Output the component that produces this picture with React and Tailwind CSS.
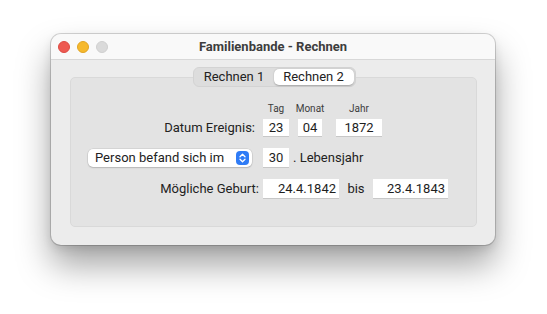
import React from "react";

function Field({ w, children, align = "center", h = "h-[18px]" }) {
  return (
    <div
      className={`${w} ${h} bg-white flex items-center ${
        align === "right" ? "justify-end pr-[3px]" : "justify-center"
      } text-[13px] text-[#1e1e1e] shadow-[0_0.5px_0.5px_rgba(0,0,0,0.12)]`}
    >
      {children}
    </div>
  );
}

export default function App() {
  return (
    <div
      className="w-[547px] h-[314px] bg-white pt-[34px] pl-[51px]"
      style={{ fontFamily: "Roboto, 'Liberation Sans', sans-serif" }}
    >
      <div className="w-[444px] h-[211px] rounded-[10px] bg-[#ececec] overflow-hidden flex flex-col shadow-[0_0_0_1px_rgba(0,0,0,0.16),0_20px_34px_rgba(0,0,0,0.36),0_4px_10px_rgba(0,0,0,0.1)]">
        {/* Title bar */}
        <div className="h-[26px] shrink-0 bg-[#f9f9f9] border-b border-[#d8d8d8] flex items-center relative">
          <div className="flex items-center gap-[7px] pl-[7px] pt-[1px]">
            <div className="w-[12px] h-[12px] rounded-full bg-[#ee5a52] border border-[#dc4b43]" />
            <div className="w-[12px] h-[12px] rounded-full bg-[#f6b92d] border border-[#e0a424]" />
            <div className="w-[12px] h-[12px] rounded-full bg-[#dadada] border border-[#cfcfcf]" />
          </div>
          <div className="absolute inset-0 flex items-center justify-center pt-[1px] text-[13px] font-bold text-[#3d3d3d] pointer-events-none">
            Familienbande - Rechnen
          </div>
        </div>

        {/* Body */}
        <div className="flex-1 flex flex-col pt-[7px] pl-[19px] pr-[18px] pb-[18px]">
          {/* Tabs */}
          <div className="relative z-10 flex justify-center pl-[1px]">
            <div className="flex h-[20px] w-[163px] rounded-[6px] bg-[#dddddd] border border-[#d3d3d3] p-[1px]">
              <div className="w-[79px] flex items-center justify-center text-[13px] text-[#222]">
                Rechnen 1
              </div>
              <div className="flex-1 flex items-center justify-center rounded-[5px] bg-white text-[13px] text-[#222] shadow-[0_0.5px_1.5px_rgba(0,0,0,0.25)]">
                Rechnen 2
              </div>
            </div>
          </div>

          {/* Group box */}
          <div className="-mt-[10px] flex-1 rounded-[5px] bg-[#e3e3e3] border border-[#d9d9d9] pt-[24px] flex flex-col">
            {/* header labels */}
            <div className="flex h-[12px] items-center text-[10px] text-[#3c3c3c]">
              <div className="w-[192px] shrink-0" />
              <div className="w-[26px] text-center">Tag</div>
              <div className="w-[9px]" />
              <div className="w-[24px] flex justify-center">
                <span>Monat</span>
              </div>
              <div className="w-[14px]" />
              <div className="w-[46px] text-center">Jahr</div>
            </div>

            {/* row 1 */}
            <div className="flex items-center mt-[5px] h-[17px]">
              <div className="w-[192px] shrink-0 text-right pr-[8px] text-[13px] text-[#222]">
                Datum Ereignis:
              </div>
              <Field w="w-[26px]" h="h-[17px]">23</Field>
              <div className="w-[9px]" />
              <Field w="w-[24px]" h="h-[17px]">04</Field>
              <div className="w-[14px]" />
              <Field w="w-[46px]" h="h-[17px]">1872</Field>
            </div>

            {/* row 2 */}
            <div className="flex items-center mt-[12px] h-[19px]">
              <div className="w-[192px] shrink-0 pl-[17px] pr-[11px]">
                <div className="h-[18px] rounded-[5px] bg-white shadow-[0_0_0_0.5px_rgba(0,0,0,0.12),0_1px_1.5px_rgba(0,0,0,0.15)] flex items-center pl-[7px] pr-[3px] text-[13px] text-[#222]">
                  <span className="flex-1">Person befand sich im</span>
                  <div className="w-[13px] h-[14px] rounded-[4px] bg-[#2f7cf6] flex items-center justify-center">
                    <svg width="7" height="10" viewBox="0 0 7 10" fill="none">
                      <path d="M1 3.7L3.5 1.3L6 3.7" stroke="white" strokeWidth="1.3" strokeLinecap="round" strokeLinejoin="round" />
                      <path d="M1 6.3L3.5 8.7L6 6.3" stroke="white" strokeWidth="1.3" strokeLinecap="round" strokeLinejoin="round" />
                    </svg>
                  </div>
                </div>
              </div>
              <Field w="w-[26px]" h="h-[19px]">30</Field>
              <div className="pl-[4px] text-[13px] text-[#222]">. Lebensjahr</div>
            </div>

            {/* row 3 */}
            <div className="flex items-center mt-[12px] h-[19px]">
              <div className="w-[192px] shrink-0 text-right pr-[4px] text-[13px] text-[#222]">
                Mögliche Geburt:
              </div>
              <Field w="w-[76px]" h="h-[19px]" align="right">24.4.1842</Field>
              <div className="w-[34px] text-center text-[13px] text-[#222]">bis</div>
              <Field w="w-[75px]" h="h-[19px]" align="right">23.4.1843</Field>
            </div>
          </div>
        </div>
      </div>
    </div>
  );
}
